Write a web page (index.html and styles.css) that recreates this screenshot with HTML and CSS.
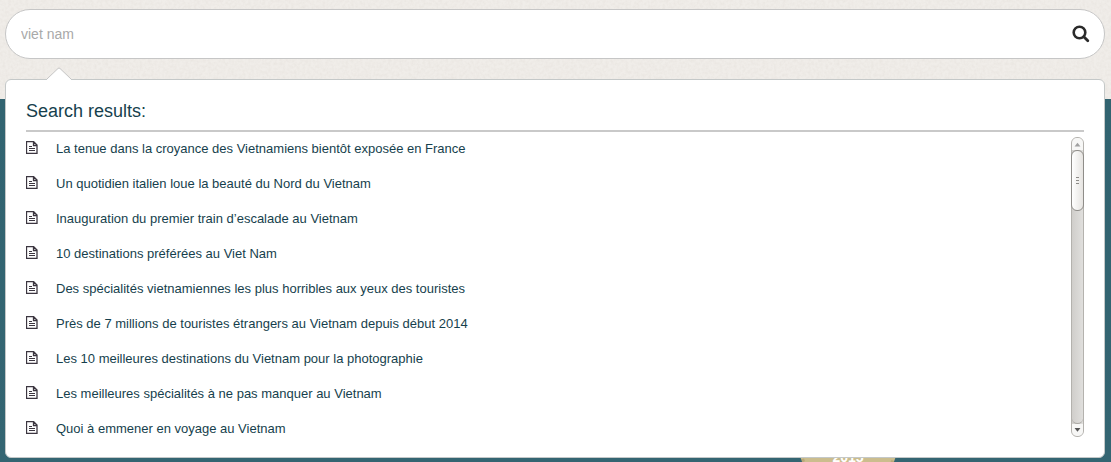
FILE: index.html
```html
<!DOCTYPE html>
<html lang="en">
<head>
<meta charset="utf-8">
<meta name="viewport" content="width=device-width, initial-scale=1">
<title>Search</title>
<link rel="stylesheet" href="styles.css">
</head>
<body>
<div class="backdrop">
  <svg class="paper" aria-hidden="true">
    <filter id="grain" x="0" y="0" width="100%" height="100%">
      <feTurbulence type="fractalNoise" baseFrequency="0.35" numOctaves="3" seed="4"/>
      <feColorMatrix values="0 0 0 0 0.6  0 0 0 0 0.55  0 0 0 0 0.5  0.3 0 0 0 -0.1"/>
    </filter>
    <rect width="100%" height="100%" filter="url(#grain)"/>
  </svg>
  <div class="seal"><span class="seal-year">2015</span></div>
</div>
<svg class="icon-defs" aria-hidden="true">
  <symbol id="doc" viewBox="0 0 12 13">
    <path d="M.5 .5H7.500L11 4V12.500H.5zM7.500 .5V4.500H11" fill="none" stroke="currentColor" stroke-width="1.300"/>
    <path d="M3 5.500h3M3 7.500h6M3 9.500h6" stroke="currentColor" stroke-width="1.100"/>
  </symbol>
</svg>
<main class="page">
  <form class="search" role="search">
    <input class="search-input" type="text" aria-label="Search" value="viet nam">
    <button class="search-button" type="button" aria-label="Search">
      <svg class="search-icon" viewBox="0 0 18 18" aria-hidden="true">
        <circle cx="7.500" cy="7.500" r="5.800" fill="none" stroke="currentColor" stroke-width="2.600"/>
        <path d="M11.800 11.800l4 4" stroke="currentColor" stroke-width="2.800" stroke-linecap="round"/>
      </svg>
    </button>
  </form>
  <section class="panel">
    <svg class="pointer" viewBox="0 0 26 13" aria-hidden="true">
      <path d="M1 12L12 1.500Q13 .5 14 1.500L25 12V13H1z" fill="#fff"/>
      <path d="M1 12L12 1.500Q13 .5 14 1.500L25 12" fill="none" stroke="#c6c6c6"/>
    </svg>
    <h1 class="title">Search results:</h1>
    <div class="results">
      <ul class="list">
        <li class="item"><svg class="doc" aria-hidden="true"><use href="#doc"/></svg><a class="link" href="#">La tenue dans la croyance des Vietnamiens bientôt exposée en France</a></li>
        <li class="item"><svg class="doc" aria-hidden="true"><use href="#doc"/></svg><a class="link" href="#">Un quotidien italien loue la beauté du Nord du Vietnam</a></li>
        <li class="item"><svg class="doc" aria-hidden="true"><use href="#doc"/></svg><a class="link" href="#">Inauguration du premier train d’escalade au Vietnam</a></li>
        <li class="item"><svg class="doc" aria-hidden="true"><use href="#doc"/></svg><a class="link" href="#">10 destinations préférées au Viet Nam</a></li>
        <li class="item"><svg class="doc" aria-hidden="true"><use href="#doc"/></svg><a class="link" href="#">Des spécialités vietnamiennes les plus horribles aux yeux des touristes</a></li>
        <li class="item"><svg class="doc" aria-hidden="true"><use href="#doc"/></svg><a class="link" href="#">Près de 7 millions de touristes étrangers au Vietnam depuis début 2014</a></li>
        <li class="item"><svg class="doc" aria-hidden="true"><use href="#doc"/></svg><a class="link" href="#">Les 10 meilleures destinations du Vietnam pour la photographie</a></li>
        <li class="item"><svg class="doc" aria-hidden="true"><use href="#doc"/></svg><a class="link" href="#">Les meilleures spécialités à ne pas manquer au Vietnam</a></li>
        <li class="item"><svg class="doc" aria-hidden="true"><use href="#doc"/></svg><a class="link" href="#">Quoi à emmener en voyage au Vietnam</a></li>
      </ul>
      <div class="scrollbar" aria-hidden="true">
        <svg class="step step-up" viewBox="0 0 13 13"><path d="M3 9.500L6.500 5L10 9.500z" fill="#a0a0a0"/></svg>
        <div class="track">
          <div class="thumb"><span class="grip"></span><span class="grip"></span><span class="grip"></span></div>
        </div>
        <svg class="step step-down" viewBox="0 0 13 13"><path d="M3 4L6.500 8.500L10 4z" fill="#555"/></svg>
      </div>
    </div>
  </section>
</main>
</body>
</html>
```
FILE: styles.css
```css
* {
  box-sizing: border-box;
}

body {
  position: relative;
  margin: 0;
  min-height: 100vh;
  font-family: "Liberation Sans", Arial, sans-serif;
  color: #163f4d;
}

.backdrop {
  position: absolute;
  inset: 0;
  overflow: hidden;
  background: linear-gradient(#f0ede9 99px, #316370 99px, #346572);
}

.paper {
  display: block;
  width: 100%;
  height: 99px;
}

.icon-defs {
  position: absolute;
  width: 0;
  height: 0;
}

.seal {
  position: absolute;
  top: 392px;
  left: 798px;
  display: flex;
  align-items: flex-end;
  justify-content: center;
  width: 100px;
  height: 100px;
  padding-bottom: 24px;
  border: 3px dotted #b9a878;
  border-radius: 50%;
  background: #cbbd8e;
}

.seal-year {
  font-size: 14px;
  line-height: 16px;
  font-weight: bold;
  color: #fff;
}

.page {
  position: relative;
  display: flex;
  flex-direction: column;
  gap: 20px;
  padding: 9px 6px 3px 5px;
}

.search {
  display: flex;
  align-items: center;
  height: 50px;
  padding: 0 14px 0 15px;
  border: 1px solid #c6c6c6;
  border-radius: 25px;
  background: #fff;
}

.search-input {
  flex: 1;
  min-width: 0;
  padding: 0;
  border: 0;
  outline: 0;
  background: none;
  font: 14px/20px "Liberation Sans", Arial, sans-serif;
  color: #a9a9a9;
}

.search-button {
  display: flex;
  padding: 0;
  border: 0;
  background: none;
  color: #2b2b2b;
}

.search-icon {
  width: 18px;
  height: 18px;
}

.panel {
  position: relative;
  padding: 20px;
  border: 1px solid #c4c8c8;
  border-radius: 6px;
  background: #fff;
}

.pointer {
  position: absolute;
  top: -13px;
  left: 40px;
  width: 26px;
  height: 13px;
}

.title {
  margin: 0 0 5px;
  padding-bottom: 8px;
  border-bottom: 2px solid #c9c9c9;
  font-size: 18px;
  line-height: 22px;
  font-weight: normal;
}

.results {
  display: flex;
  height: 300px;
  overflow: hidden;
}

.list {
  display: flex;
  flex: 1;
  flex-direction: column;
  gap: 11px;
  margin: 0;
  padding: 0;
  list-style: none;
}

.item {
  display: flex;
  align-items: flex-start;
  gap: 18px;
  font-size: 13px;
  line-height: 24px;
}

.doc {
  flex: none;
  width: 12px;
  height: 13px;
  margin-top: 4px;
  color: #3c3640;
}

.link {
  color: inherit;
  text-decoration: none;
}

.scrollbar {
  display: flex;
  flex-direction: column;
  width: 13px;
  border: 1px solid #b4b2ae;
  border-radius: 6px;
  background: linear-gradient(90deg, #d0cecb, #e0dfdd);
}

.step {
  flex: none;
  height: 12px;
  background: #f7f7f6;
}

.step-up {
  border-radius: 5px 5px 0 0;
}

.step-down {
  border-radius: 0 0 5px 5px;
}

.track {
  flex: 1;
  border-radius: 0 0 6px 6px;
  border-bottom: 1px solid #aaa8a4;
}

.thumb {
  display: flex;
  flex-direction: column;
  align-items: center;
  justify-content: center;
  gap: 2px;
  height: 61px;
  margin: 0 -1px;
  border: 1px solid #8f8d89;
  border-radius: 6px;
  background: linear-gradient(90deg, #fff, #e6e4e1);
}

.grip {
  width: 3px;
  height: 1px;
  background: #8d8b88;
}
```
